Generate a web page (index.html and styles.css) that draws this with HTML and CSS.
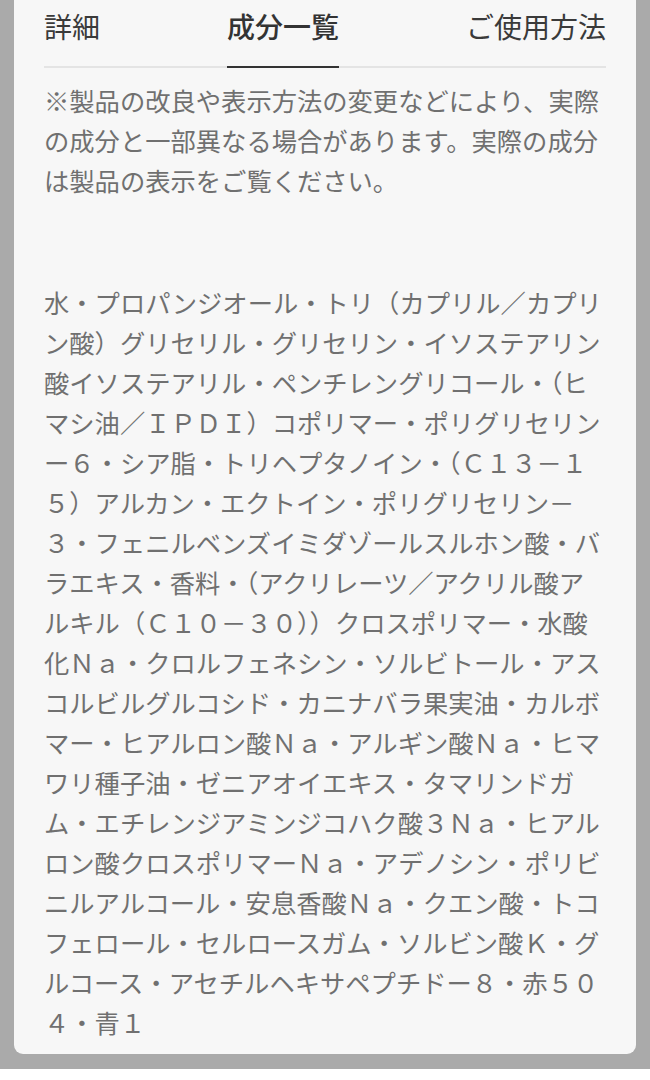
FILE: index.html
```html
<!DOCTYPE html>
<html lang="ja">
<head>
	<meta charset="UTF-8">
	<title>成分一覧</title>
	<link rel="stylesheet" href="styles.css">
</head>
<body>
	<div class="sheet">
		<div class="panel">
			<ul class="tabs">
				<li>詳細</li>
				<li class="active">成分一覧</li>
				<li>ご使用方法</li>
			</ul>
			<p class="note">※製品の改良や表示方法の変更などにより、実際の成分と一部異なる場合があります。実際の成分は製品の表示をご覧ください。</p>
			<p class="ingredients">水・プロパンジオール・トリ（カプリル／カプリン酸）グリセリル・グリセリン・イソステアリン酸イソステアリル・ペンチレングリコール・（ヒマシ油／ＩＰＤＩ）コポリマー・ポリグリセリンー６・シア脂・トリヘプタノイン・（Ｃ１３－１５）アルカン・エクトイン・ポリグリセリン－３・フェニルベンズイミダゾールスルホン酸・バラエキス・香料・（アクリレーツ／アクリル酸アルキル（Ｃ１０－３０））クロスポリマー・水酸化Ｎａ・クロルフェネシン・ソルビトール・アスコルビルグルコシド・カニナバラ果実油・カルボマー・ヒアルロン酸Ｎａ・アルギン酸Ｎａ・ヒマワリ種子油・ゼニアオイエキス・タマリンドガム・エチレンジアミンジコハク酸３Ｎａ・ヒアルロン酸クロスポリマーＮａ・アデノシン・ポリビニルアルコール・安息香酸Ｎａ・クエン酸・トコフェロール・セルロースガム・ソルビン酸Ｋ・グルコース・アセチルヘキサペプチドー８・赤５０４・青１</p>
		</div>
	</div>
</body>
</html>
```

FILE: styles.css
```css
body {
	margin: 0;
	padding: 0;
	background-color: #fff;
	font-family: "Noto Sans CJK JP", "Noto Sans", sans-serif;
}
ul {
	margin: 0;
	padding: 0;
	list-style-type: none;
}

/*グレーの背景*/
.sheet {
	background-color: #aaa;
	padding: 0 14px 15px;
}

/*白いカード*/
.panel {
	background-color: #f7f7f7;
	padding: 0 30px 12px;
	border-radius: 0 0 9px 9px;
}

/*タブ*/
.tabs {
	display: flex;
	justify-content: space-between;
	border-bottom: 2px solid #e4e4e4;
}
.tabs li {
	font-size: 28px;
	line-height: 52px;
	height: 52px;
	padding-bottom: 14px;
	margin-bottom: -2px;
	color: #3a3a3a;
	border-bottom: 2px solid transparent;
}
.tabs li.active {
	font-weight: 500;
	color: #333;
	border-bottom-color: #333;
}

/*本文*/
.note,
.ingredients {
	margin: 0;
	font-size: 25.3px;
	line-height: 40px;
	color: #707070;
}
.note {
	padding-top: 12px;
}
.ingredients {
	margin-top: 82px;
}
```
